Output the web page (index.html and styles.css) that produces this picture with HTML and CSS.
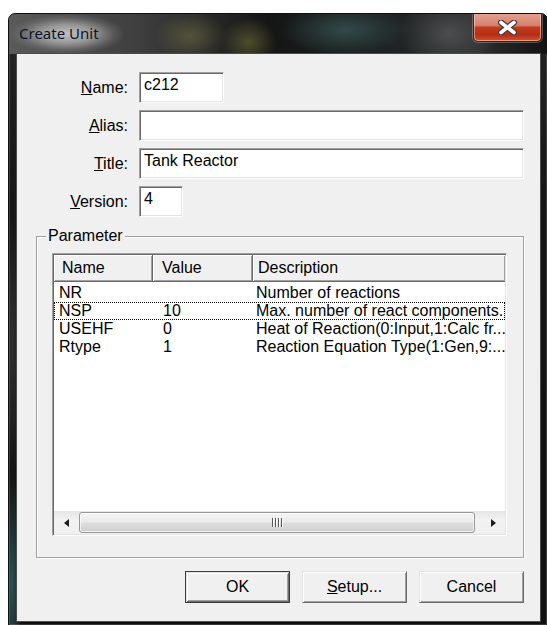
FILE: index.html
```html
<!DOCTYPE html>
<html lang="en">
<head>
<meta charset="utf-8">
<title>Create Unit</title>
<link rel="stylesheet" href="styles.css">
</head>
<body>
<div class="window">
  <div class="titlebar">
    <span class="caption">Create Unit</span>
    <button class="close" type="button" aria-label="Close">
      <svg width="19" height="15" viewBox="0 0 19 15">
        <path d="M3 2.5 L16 12.5 M16 2.5 L3 12.5" stroke="#3c3c3c" stroke-width="6" stroke-linecap="round"/>
        <path d="M3 2.5 L16 12.5 M16 2.5 L3 12.5" stroke="#ffffff" stroke-width="3.6" stroke-linecap="round"/>
      </svg>
    </button>
  </div>

  <div class="client">
    <div class="fields">
      <label class="lbl"><u>N</u>ame:</label>
      <div class="edit edit-name">c212</div>
      <label class="lbl"><u>A</u>lias:</label>
      <div class="edit edit-wide"></div>
      <label class="lbl"><u>T</u>itle:</label>
      <div class="edit edit-wide">Tank Reactor</div>
      <label class="lbl"><u>V</u>ersion:</label>
      <div class="edit edit-version">4</div>
    </div>

    <div class="group">
      <div class="group-title">Parameter</div>
      <div class="list">
        <div class="list-head">
          <div class="hcell h-name">Name</div>
          <div class="hcell h-value">Value</div>
          <div class="hcell h-desc">Description</div>
        </div>
        <div class="list-body">
          <div class="row">
            <span class="c-name">NR</span><span class="c-value"></span><span class="c-desc">Number of reactions</span>
          </div>
          <div class="row focused">
            <span class="c-name">NSP</span><span class="c-value">10</span><span class="c-desc">Max. number of react components.</span>
          </div>
          <div class="row">
            <span class="c-name">USEHF</span><span class="c-value">0</span><span class="c-desc">Heat of Reaction(0:Input,1:Calc fr...</span>
          </div>
          <div class="row">
            <span class="c-name">Rtype</span><span class="c-value">1</span><span class="c-desc">Reaction Equation Type(1:Gen,9:...</span>
          </div>
        </div>
        <div class="hscroll">
          <div class="sb-arrow"><span class="tri-left"></span></div>
          <div class="sb-track">
            <div class="sb-thumb"><span class="grip"><i></i><i></i><i></i><i></i></span></div>
          </div>
          <div class="sb-arrow"><span class="tri-right"></span></div>
        </div>
      </div>
    </div>

    <div class="buttons">
      <button class="btn default" type="button">OK</button>
      <button class="btn" type="button"><u>S</u>etup...</button>
      <button class="btn" type="button">Cancel</button>
    </div>
  </div>
</div>
</body>
</html>
```

FILE: styles.css
```css
* {
  box-sizing: border-box;
}

html,
body {
  margin: 0;
  padding: 0;
}

body {
  width: 547px;
  height: 625px;
  overflow: hidden;
  background: #ffffff;
  font-family: "Liberation Sans", Arial, sans-serif;
  font-size: 16px;
  color: #000000;
}

/* ---------- window frame (Aero glass) ---------- */
.window {
  margin: 13px 0 0 8px;
  width: 540px;
  height: 613px;
  display: flex;
  flex-direction: column;
  border: 1px solid #101010;
  border-radius: 7px 7px 0 0;
  box-shadow: inset 0 0 0 1px rgba(255, 255, 255, 0.16);
  overflow: hidden;
  background:
    radial-gradient(10px 110px at 3px 570px, rgba(45, 95, 95, 0.85), rgba(45, 95, 95, 0)),
    radial-gradient(10px 140px at 3px 330px, rgba(60, 60, 60, 0.7), rgba(60, 60, 60, 0)),
    linear-gradient(to bottom, #262626, #141414 200px, #111111);
}

.titlebar {
  height: 40px;
  flex: none;
  display: flex;
  align-items: flex-start;
  background:
    radial-gradient(36px 24px at 182px 22px, rgba(120, 120, 70, 0.5), rgba(120, 120, 70, 0)),
    radial-gradient(28px 24px at 240px 28px, rgba(125, 125, 60, 0.5), rgba(125, 125, 60, 0)),
    radial-gradient(64px 26px at 335px 16px, rgba(70, 110, 110, 0.55), rgba(70, 110, 110, 0)),
    radial-gradient(50px 36px at 440px 20px, rgba(110, 115, 115, 0.5), rgba(110, 115, 115, 0)),
    linear-gradient(to right, #5a5a5a 0, #3e3e3e 130px, #151515 260px, #1e2222 380px, #2c2c2c 470px, #121212 540px);
}

/* caption text sits on the soft Aero glow */
.caption {
  height: 40px;
  padding: 0 26px 0 10px;
  font-family: "Noto Sans", "Open Sans", sans-serif;
  font-size: 15px;
  line-height: 39px;
  color: #08142a;
  background: radial-gradient(closest-side, rgba(200, 200, 200, 0.95), rgba(170, 170, 170, 0.8) 45%, rgba(130, 130, 130, 0.35) 80%, rgba(110, 110, 110, 0));
}

.close {
  margin: -1px 5px 0 auto;
  width: 69px;
  height: 29px;
  padding: 0;
  display: flex;
  align-items: center;
  justify-content: center;
  border: 1px solid #3a2424;
  border-top: none;
  border-radius: 0 0 5px 5px;
  box-shadow: inset 0 0 0 1px rgba(255, 225, 215, 0.5), 0 0 0 1px rgba(255, 255, 255, 0.25);
  background: linear-gradient(to bottom, #e3a293 0%, #d9816f 44%, #c2391c 52%, #b52e16 78%, #d2532e 100%);
}

.close svg {
  display: block;
}

/* ---------- dialog client area ---------- */
.client {
  flex: 1;
  margin: 0 7px 4px 8px;
  background: #f0f0f0;
  box-shadow: 0 0 0 1px #4c4c4c;
  padding: 18px 16px 0 19px;
  display: flex;
  flex-direction: column;
}

.fields {
  display: grid;
  grid-template-columns: 92px 1fr;
  grid-auto-rows: 31px;
  column-gap: 11px;
  row-gap: 7px;
}

.lbl {
  justify-self: end;
  align-self: center;
  line-height: 18px;
}

.edit {
  background: #ffffff;
  border: 1px solid;
  border-color: #a0a0a0 #ffffff #ffffff #a0a0a0;
  box-shadow: inset 1px 1px 0 #696969, inset -1px -1px 0 #e3e3e3;
  padding: 3px 4px 0 4px;
  line-height: 18px;
  white-space: nowrap;
}

.edit-name {
  width: 85px;
}

.edit-version {
  width: 44px;
}

/* ---------- group box ---------- */
.group {
  margin-top: 19px;
  border: 1px solid #a0a0a0;
  box-shadow: inset 1px 1px 0 #ffffff, 1px 1px 0 #ffffff;
  padding: 0 16px 21px 15px;
}

.group-title {
  width: fit-content;
  margin: -10px 0 8px -6px;
  padding: 0 2px;
  background: #f0f0f0;
  line-height: 18px;
}

/* ---------- list view ---------- */
.list {
  height: 283px;
  background: #ffffff;
  border: 1px solid;
  border-color: #a0a0a0 #ffffff #ffffff #a0a0a0;
  box-shadow: inset 1px 1px 0 #696969, inset -1px -1px 0 #e3e3e3;
  padding: 1px;
  display: flex;
  flex-direction: column;
  overflow: hidden;
}

.list-head {
  display: grid;
  grid-template-columns: 99px 100px 1fr;
  height: 27px;
  flex: none;
}

.hcell {
  background: #f0f0f0;
  border-right: 1px solid #696969;
  border-bottom: 1px solid #696969;
  box-shadow: inset 1px 1px 0 #ffffff, inset -1px -1px 0 #a0a0a0;
  line-height: 26px;
  white-space: nowrap;
}

.h-name {
  padding-left: 8px;
}

.h-value {
  padding-left: 9px;
}

.h-desc {
  padding-left: 5px;
  border-right: none;
}

.list-body {
  flex: 1;
  padding-top: 2px;
}

.row {
  display: grid;
  grid-template-columns: 99px 100px 1fr;
  height: 18px;
  line-height: 18px;
  white-space: nowrap;
}

.row.focused {
  outline: 1px dotted #000000;
  outline-offset: -1px;
}

.c-name {
  padding-left: 5px;
}

.c-value {
  padding-left: 10px;
}

.c-desc {
  padding-left: 3px;
  overflow: hidden;
}

/* ---------- horizontal scroll bar ---------- */
.hscroll {
  flex: none;
  height: 23px;
  display: grid;
  grid-template-columns: 24px 1fr 24px;
  background: linear-gradient(to bottom, #e6e6e6, #f2f2f2 40%, #f0f0f0);
}

.sb-arrow {
  display: flex;
  align-items: center;
  justify-content: center;
}

.tri-left {
  width: 0;
  height: 0;
  border-top: 4px solid transparent;
  border-bottom: 4px solid transparent;
  border-right: 5px solid #1e1e1e;
}

.tri-right {
  width: 0;
  height: 0;
  border-top: 4px solid transparent;
  border-bottom: 4px solid transparent;
  border-left: 5px solid #1e1e1e;
}

.sb-track {
  padding: 1px 6px 1px 1px;
  display: flex;
}

.sb-thumb {
  flex: 1;
  border: 1px solid #979797;
  border-radius: 3px;
  box-shadow: inset 0 0 0 1px rgba(255, 255, 255, 0.7);
  background: linear-gradient(to bottom, #f4f4f4 0%, #ebebeb 45%, #dcdcdc 55%, #cfcfcf 100%);
  display: flex;
  align-items: center;
  justify-content: center;
}

.grip {
  display: flex;
  gap: 2px;
  height: 9px;
}

.grip i {
  width: 1px;
  height: 9px;
  background: #595959;
  box-shadow: 1px 0 0 #ffffff;
}

/* ---------- dialog buttons ---------- */
.buttons {
  margin-top: 13px;
  display: flex;
  justify-content: flex-end;
  gap: 12px;
}

.btn {
  width: 105px;
  height: 32px;
  padding: 0;
  font-family: "Liberation Sans", Arial, sans-serif;
  font-size: 16px;
  color: #000000;
  background: #f0f0f0;
  border: 1px solid;
  border-color: #e3e3e3 #696969 #696969 #e3e3e3;
  box-shadow: inset 1px 1px 0 #ffffff, inset -1px -1px 0 #a0a0a0;
}

.btn.default {
  border-color: #3c3c3c;
  box-shadow: inset 1px 1px 0 #e3e3e3, inset -1px -1px 0 #696969, inset 2px 2px 0 #ffffff, inset -2px -2px 0 #a0a0a0;
}
```
